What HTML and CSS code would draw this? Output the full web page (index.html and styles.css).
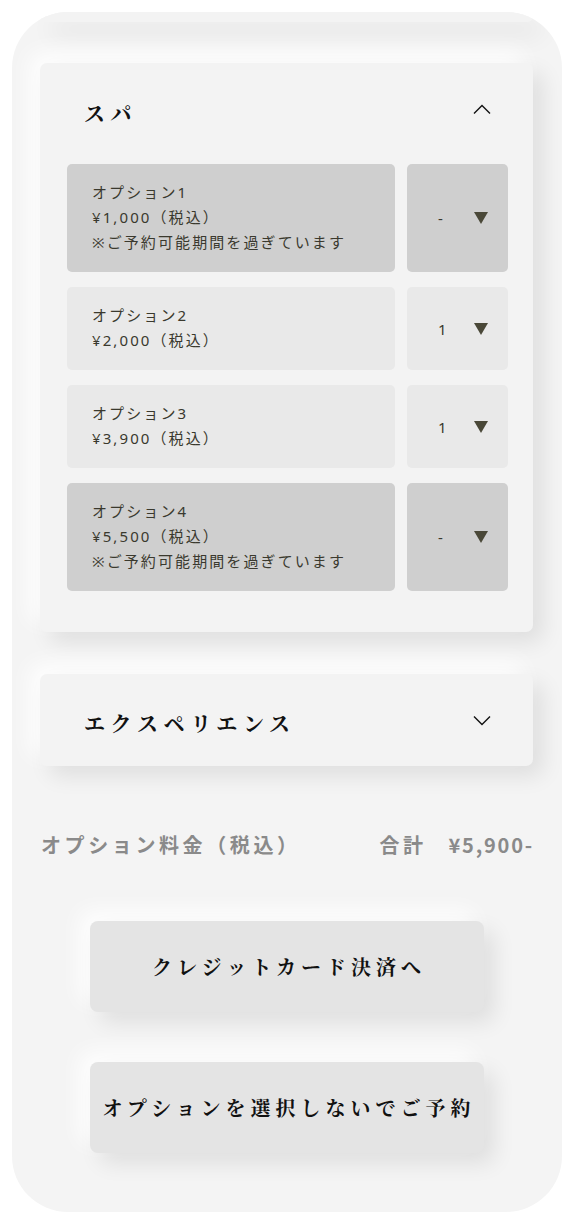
FILE: index.html
```html
<!DOCTYPE html>
<html lang="ja">
<head>
<meta charset="utf-8">
<title>オプション選択</title>
<link rel="stylesheet" href="styles.css">
</head>
<body>
<div class="frame">
  <div class="card-tail"></div>

  <section class="card open">
    <div class="card-head">
      <h2 class="card-title">スパ</h2>
      <svg class="chev" width="18" height="10" viewBox="0 0 18 10"><path d="M1 9.5 L9 1.5 L17 9.5" fill="none" stroke="#111" stroke-width="1.4"/></svg>
    </div>
    <div class="options">
      <div class="opt disabled">
        <div class="opt-info">
          <p>オプション1</p>
          <p>¥1,000（税込）</p>
          <p>※ご予約可能期間を過ぎています</p>
        </div>
        <div class="opt-sel"><span class="qty">-</span><span class="tri"></span></div>
      </div>
      <div class="opt">
        <div class="opt-info">
          <p>オプション2</p>
          <p>¥2,000（税込）</p>
        </div>
        <div class="opt-sel"><span class="qty">1</span><span class="tri"></span></div>
      </div>
      <div class="opt">
        <div class="opt-info">
          <p>オプション3</p>
          <p>¥3,900（税込）</p>
        </div>
        <div class="opt-sel"><span class="qty">1</span><span class="tri"></span></div>
      </div>
      <div class="opt disabled">
        <div class="opt-info">
          <p>オプション4</p>
          <p>¥5,500（税込）</p>
          <p>※ご予約可能期間を過ぎています</p>
        </div>
        <div class="opt-sel"><span class="qty">-</span><span class="tri"></span></div>
      </div>
    </div>
  </section>

  <section class="card closed">
    <div class="card-head">
      <h2 class="card-title">エクスペリエンス</h2>
      <svg class="chev" width="18" height="10" viewBox="0 0 18 10"><path d="M1 0.5 L9 8.5 L17 0.5" fill="none" stroke="#111" stroke-width="1.4"/></svg>
    </div>
  </section>

  <div class="summary">
    <span class="sum-label">オプション料金（税込）</span>
    <span class="sum-total">合計<span class="sum-price">¥5,900-</span></span>
  </div>

  <div class="actions">
    <button class="btn">クレジットカード決済へ</button>
    <button class="btn">オプションを選択しないでご予約</button>
  </div>
</div>
</body>
</html>
```

FILE: styles.css
```css
* { box-sizing: border-box; }
html, body { margin: 0; padding: 0; background: #ffffff; }
body {
  padding: 12px;
  font-family: "Noto Sans CJK JP", "Noto Sans", sans-serif;
}
.frame {
  width: 550px;
  height: 1200px;
  background: #f4f4f4;
  border-radius: 56px;
  overflow: hidden;
  padding: 0 29px 0 28px;
}
.card-tail {
  height: 10px;
  background: #f3f3f3;
  border-radius: 0 0 6px 6px;
  box-shadow: 10px 12px 24px rgba(0,0,0,0.09);
}
.card {
  background: #f3f3f3;
  border-radius: 7px;
  box-shadow: 10px 10px 22px rgba(0,0,0,0.09), -10px -10px 22px rgba(255,255,255,0.95);
}
.card.open { margin-top: 41px; padding: 0 25px 41px 27px; }
.card.closed { margin-top: 42px; padding: 0 25px 0 27px; }
.card-head {
  display: flex;
  align-items: center;
  justify-content: space-between;
  padding: 0 17px 0 17px;
}
.card.open .card-head { height: 101px; }
.card.closed .card-head { height: 92px; }
.card-title {
  margin: 0;
  font-family: "Noto Serif CJK JP", "IPAMincho", "Noto Sans CJK JP", serif;
  font-weight: 700;
  font-size: 21px;
  letter-spacing: 5.6px;
  color: #111;
}
.card.open .card-title { margin-top: -4px; }
.card.closed .card-title { margin-top: 4px; }
.chev { display: block; }
.card.open .chev { margin-top: -9px; }
.card.closed .chev { margin-top: 2px; }
.options { display: flex; flex-direction: column; gap: 15px; }
.opt { display: flex; gap: 12px; }
.opt-info {
  flex: 0 0 328px;
  background: #e9e9e9;
  border-radius: 5px;
  padding: 16px 20px 17px 25px;
}
.opt-info p {
  margin: 0;
  font-family: "Noto Sans", "Noto Sans CJK JP", sans-serif;
  font-size: 15px;
  line-height: 25px;
  letter-spacing: 2.1px;
  white-space: nowrap;
  color: #3a392e;
}
.opt-sel {
  flex: 1;
  background: #e9e9e9;
  border-radius: 5px;
  display: flex;
  align-items: center;
  padding-left: 31px;
}
.opt.disabled .opt-info, .opt.disabled .opt-sel { background: #cfcfcf; }
.qty {
  width: 36px;
  font-family: "Noto Sans", sans-serif;
  font-size: 15px;
  color: #3a392e;
}
.tri {
  width: 0; height: 0;
  border-left: 7px solid transparent;
  border-right: 7px solid transparent;
  border-top: 12px solid #4a4838;
}
.summary {
  display: flex;
  justify-content: space-between;
  align-items: center;
  margin-top: 62px;
  padding: 0 0 0 1px;
  height: 32px;
  font-weight: 700;
  font-size: 20px;
  color: #8a8a8a;
}
.sum-label { letter-spacing: 3.6px; }
.sum-total { letter-spacing: 3.5px; margin-right: -1px; }
.sum-price { margin-left: 22px; letter-spacing: 1.8px; }
.actions {
  display: flex;
  flex-direction: column;
  align-items: center;
  gap: 50px;
  margin-top: 61px;
}
.btn {
  width: 394px;
  height: 91px;
  border: none;
  border-radius: 8px;
  background: #e4e4e4;
  box-shadow: 10px 10px 22px rgba(0,0,0,0.09), -10px -10px 22px rgba(255,255,255,0.95);
  font-family: "Noto Serif CJK JP", "IPAMincho", "Noto Sans CJK JP", serif;
  font-weight: 700;
  font-size: 20px;
  letter-spacing: 5px;
  color: #111;
  padding: 0 0 0 5px;
}
```
